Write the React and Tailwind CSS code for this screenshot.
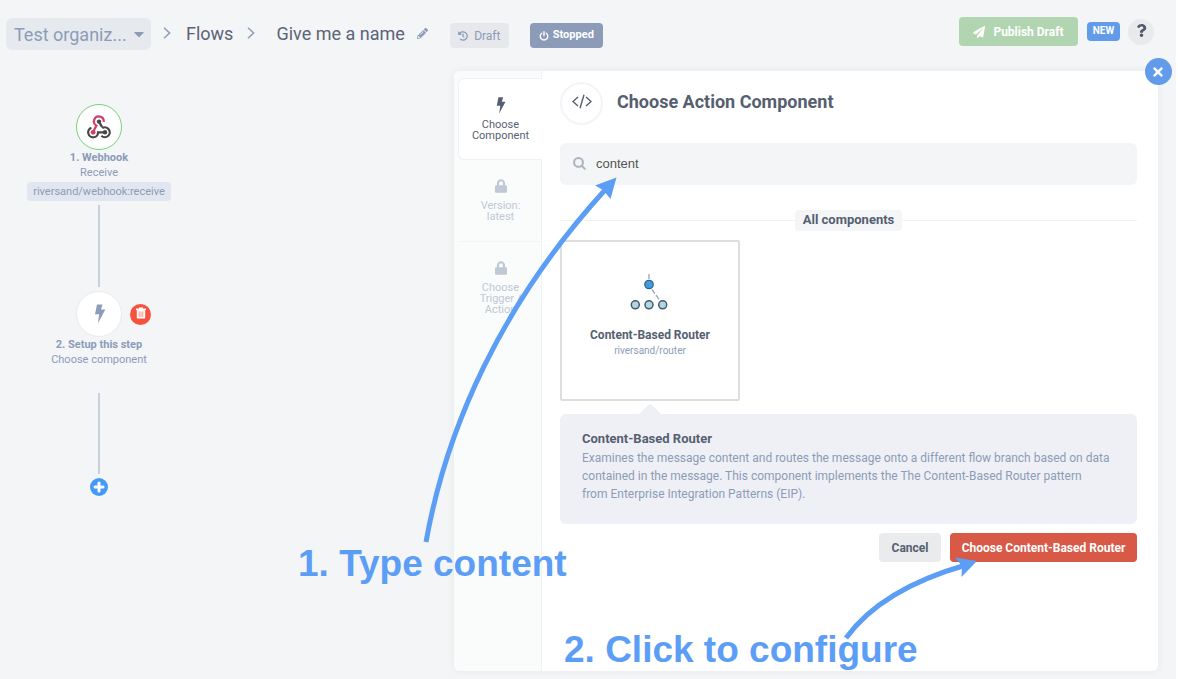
import React, { useState } from "react";
import {
  FaCaretDown,
  FaHistory,
  FaLock,
  FaPaperPlane,
  FaPencilAlt,
  FaQuestion,
  FaTimes,
} from "react-icons/fa";

function Chevron() {
  return (
    <svg className="h-3 w-2 shrink-0 text-[#8c9cb8]" viewBox="0 0 8 12" fill="none" stroke="currentColor" strokeWidth="1.5" aria-hidden="true">
      <path d="M1 0.8 6.6 6 1 11.2" />
    </svg>
  );
}

function Bolt({ className }) {
  return (
    <svg className={className} viewBox="0 0 12 20" fill="currentColor" aria-hidden="true">
      <path d="M3 0.4H8.6L6.9 5.6H11.3L3.9 19.4L5.2 10.3H1Z" />
    </svg>
  );
}

function PlusIcon() {
  return (
    <svg className="h-3 w-3" viewBox="0 0 12 12" fill="none" stroke="currentColor" strokeWidth="3" strokeLinecap="round" aria-hidden="true">
      <path d="M6 2V10M2 6H10" />
    </svg>
  );
}

function PowerIcon() {
  return (
    <svg className="h-2.5 w-2.5" viewBox="0 0 10 10" fill="none" stroke="currentColor" strokeWidth="1.4" strokeLinecap="round" aria-hidden="true">
      <path d="M5 0.8V4.6M2.7 2.2A3.8 3.8 0 1 0 7.3 2.2" />
    </svg>
  );
}

function SearchIcon() {
  return (
    <svg className="mb-0.5 h-[13px] w-[13px] text-[#a9b3c0]" viewBox="0 0 13 13" fill="none" stroke="currentColor" strokeWidth="2" strokeLinecap="round" aria-hidden="true">
      <circle cx="5.5" cy="5.4" r="4.4" />
      <path d="M9 9 11.8 11.9" />
    </svg>
  );
}

function WebhookLogo() {
  return (
    <svg className="h-6 w-6" viewBox="0 0 24 24" fill="none" strokeWidth="2.2" aria-hidden="true">
      <path d="M16.7 6.9A4.9 4.9 0 1 0 9.4 10.6L6.1 17" stroke="#d23d6c" />
      <path d="M12 6.6 15.1 12.1" stroke="#474747" />
      <path d="M15.3 13.1A4.9 4.9 0 1 1 14.4 20.8" stroke="#474747" />
      <path d="M4.4 12.8A4.9 4.9 0 1 0 11 17.4H18" stroke="#474747" />
      <circle cx="12" cy="6.6" r="2.2" fill="#474747" />
      <circle cx="6.1" cy="17.3" r="2.4" fill="#d23d6c" />
      <circle cx="18" cy="17.3" r="2.2" fill="#474747" />
    </svg>
  );
}

function TrashIcon() {
  return (
    <svg className="h-3 w-3" viewBox="0 0 12 12" aria-hidden="true">
      <path d="M4 1.6V0.6H8V1.6H11V3H1V1.6Z" fill="#fff" />
      <path d="M1.8 3H10.2V10.4Q10.2 11.6 9 11.6H3Q1.8 11.6 1.8 10.4Z" fill="#fff" />
      <path d="M4.2 4.4V10M6 4.4V10M7.8 4.4V10" stroke="#f7513f" strokeWidth="0.6" />
    </svg>
  );
}

function RouterLogo() {
  return (
    <svg className="mr-0.5 h-9 w-10" viewBox="0 0 40 36" fill="none" aria-hidden="true">
      <path d="M20 0V6M23 15.5 30.5 26" stroke="#9aa3b3" strokeWidth="1.3" strokeDasharray="5 2" />
      <circle cx="20" cy="10.5" r="4.2" fill="#4499e0" stroke="#28688f" strokeWidth="1.3" />
      <g fill="#b0d5e8" stroke="#4b5866" strokeWidth="1.5">
        <circle cx="6.3" cy="30.8" r="4" />
        <circle cx="20" cy="30.8" r="4" />
        <circle cx="33.7" cy="30.8" r="4" />
      </g>
    </svg>
  );
}

function Header() {
  return (
    <header className="flex h-[71px] items-start justify-between pr-[22px] pl-1.5">
      <div className="flex h-[71px] items-start">
        <button className="mt-[18px] flex h-8 w-[145px] shrink-0 items-center justify-between rounded-md bg-[#e6e9ee] pr-1.5 pl-2 text-[18px] text-[#8c9cb8]">
          Test organiz...
          <FaCaretDown className="h-4 w-3" />
        </button>
        <nav aria-label="Breadcrumb" className="mt-[17px] ml-3 flex h-8 items-center text-[18px] whitespace-nowrap text-[#5b6476]">
          <Chevron />
          <a href="#flows" className="ml-[15px]">Flows</a>
          <span className="ml-3.5"><Chevron /></span>
          <span className="ml-[21px]">Give me a name</span>
        </nav>
        <button aria-label="Rename flow" className="mt-7 ml-3 text-[#8c9cb8]">
          <FaPencilAlt className="h-[11px] w-[11px]" />
        </button>
        <button className="mt-[23px] ml-[22px] flex h-[25px] w-[59px] items-center justify-center gap-1.5 rounded bg-[#e6e8eb] text-[12px] text-[#8c9cb8]">
          <FaHistory className="h-2.5 w-2.5" />
          Draft
        </button>
        <button className="mt-[23px] ml-[21px] flex h-[25px] w-[73px] items-center justify-center gap-1 rounded bg-[#8c9cb8] text-[11px] font-bold text-white">
          <PowerIcon />
          Stopped
        </button>
      </div>
      <div className="flex items-center pt-[17px]">
        <button className="flex h-[29px] w-[119px] items-center justify-center gap-2 rounded bg-[#b1d5b0] text-[12px] font-bold text-white">
          <FaPaperPlane className="h-3 w-3" />
          Publish Draft
        </button>
        <a href="#new" className="ml-[9px] flex h-[19px] w-[33px] items-center justify-center rounded bg-[#619bea] pb-0.5 text-[10px] font-bold text-white">
          NEW
        </a>
        <button aria-label="Help" className="ml-2 flex h-[26px] w-[26px] items-center justify-center rounded-full bg-[#e8eaed] pb-0.5 text-[#4f5868]">
          <FaQuestion className="h-[13px] w-[13px]" />
        </button>
      </div>
    </header>
  );
}

function FlowCanvas() {
  return (
    <section aria-label="Flow" className="w-[454px] shrink-0">
      <div className="flex w-[198px] flex-col items-center pt-[33px] text-[11px] leading-[15px] text-[#8c9cb8]">
        <button aria-label="Webhook step" className="flex h-[46px] w-[46px] items-center justify-center rounded-full border border-[#74cf78] bg-white">
          <WebhookLogo />
        </button>
        <strong className="font-bold">1. Webhook</strong>
        <span>Receive</span>
        <span className="mt-0.5 flex h-[19px] items-center rounded bg-[#e2e6ee] px-1.5">riversand/webhook:receive</span>
        <div className="mt-1 h-[82px] w-0.5 bg-[#c8d0e0]" />
        <div className="mt-1 flex w-full items-center">
          <button aria-label="Set up this step" className="ml-[76px] flex h-[46px] w-[46px] items-center justify-center rounded-full border border-[#e9ebee] bg-white pl-0.5">
            <Bolt className="h-5 w-3" />
          </button>
          <button aria-label="Delete step" className="ml-2 flex h-[21px] w-[21px] items-center justify-center rounded-full bg-[#f7513f] pb-0.5">
            <TrashIcon />
          </button>
        </div>
        <strong className="font-bold">2. Setup this step</strong>
        <span>Choose component</span>
        <div className="mt-[26px] h-[81px] w-0.5 bg-[#c8d0e0]" />
        <button aria-label="Add step" className="mt-1 flex h-[18px] w-[18px] items-center justify-center rounded-full bg-[#4599f7] text-white">
          <PlusIcon />
        </button>
      </div>
    </section>
  );
}

function Steps() {
  return (
    <ol className="w-[88px] shrink-0 rounded-l-md border-r border-[#eff1f2] bg-[#fafcfb] pt-[7px] pl-1 text-center text-[11px] leading-[11px] text-[#c0c8d5]">
      <li className="-mr-px flex h-[82px] flex-col items-center rounded-l-md border border-r-0 border-[#eff1f2] bg-white pt-[18px] text-[#565f70]">
        <Bolt className="mb-[5px] h-[17px] w-3" />
        <p>Choose<br />Component</p>
      </li>
      <li className="flex h-[82px] flex-col items-center border-b border-[#f2f4f5] pt-[19px] pl-0.5">
        <FaLock className="mb-[7px] h-[14px] w-3" />
        <p>Version:<br />latest</p>
      </li>
      <li className="flex flex-col items-center pt-[19px] pl-0.5">
        <FaLock className="mb-[7px] h-[14px] w-3" />
        <p>Choose<br />Trigger /<br />Action</p>
      </li>
    </ol>
  );
}

function ComponentPicker() {
  const [query, setQuery] = useState("content");
  return (
    <div className="min-w-0 flex-1 pt-[11px] pr-[21px] pl-[18px]">
      <div className="flex items-start">
        <span className="flex h-[43px] w-[43px] shrink-0 items-center justify-center rounded-full border-2 border-[#f3f4f5] pb-1 text-[#565f70]">
          <svg className="h-4 w-5" viewBox="0 0 20 16" fill="none" stroke="currentColor" strokeWidth="1.4" aria-hidden="true">
            <path d="M6 3 1 7.5 6 12M14 3 19 7.5 14 12M12 0.7 8 14.3" />
          </svg>
        </span>
        <h1 className="ml-3.5 text-[18px] leading-10 font-bold text-[#565f70]">Choose Action Component</h1>
      </div>
      <label className="mt-[18px] flex h-[42px] items-center rounded-md bg-[#f3f5f7] pl-[13px]">
        <SearchIcon />
        <input
          aria-label="Search components"
          value={query}
          onChange={(event) => setQuery(event.target.value)}
          className="ml-2.5 min-w-0 flex-1 bg-transparent font-['Liberation_Sans',Arial,sans-serif] text-[13px] text-[#555] outline-none"
        />
      </label>
      <div className="mt-[25px] flex h-[21px] items-center">
        <span className="h-px flex-1 bg-[#f2f3f4]" />
        <h2 className="flex h-[21px] items-center rounded bg-[#f3f5f7] px-2 pb-0.5 text-[13px] font-bold text-[#565f70]">All components</h2>
        <span className="h-px flex-1 bg-[#f2f3f4]" />
      </div>
      <button className="mt-[9px] flex h-[161px] w-[180px] flex-col items-center rounded-xs border-2 border-[#dddfdf] pt-8">
        <RouterLogo />
        <span className="mt-[17px] text-[12px] leading-4 font-bold text-[#565f70]">Content-Based Router</span>
        <span className="text-[10px] leading-4 text-[#8c9cb8]">riversand/router</span>
      </button>
      <svg className="mt-[3px] ml-[79px] h-2.5 w-[22px]" viewBox="0 0 22 10" fill="#eff0f5" aria-hidden="true">
        <path d="M0 10 9 1.2Q11 -0.8 13 1.2L22 10Z" />
      </svg>
      <article className="min-h-[110px] rounded-md bg-[#eff0f5] px-[22px] pt-4 text-[12px] leading-[18px]">
        <h3 className="mb-px text-[13px] font-bold text-[#565f70]">Content-Based Router</h3>
        <p className="text-[#8c9cb8]">
          Examines the message content and routes the message onto a different flow branch based on data contained in the message. This component implements the The Content-Based Router pattern
          <br />
          from Enterprise Integration Patterns (EIP).
        </p>
      </article>
      <div className="mt-[9px] flex justify-end gap-[9px] text-[12px] font-bold">
        <button className="h-[29px] w-[62px] rounded bg-[#e9ebec] text-[#565f70]">Cancel</button>
        <button className="h-[29px] w-[187px] rounded bg-[#d75946] whitespace-nowrap text-white">Choose Content-Based Router</button>
      </div>
    </div>
  );
}

function Annotations() {
  return (
    <div className="pointer-events-none absolute inset-0 overflow-hidden font-['Liberation_Sans',Arial,sans-serif] text-[37px] leading-[42px] font-bold whitespace-nowrap text-[#5c9df5]">
      <svg className="absolute top-0 left-0 h-[679px] w-[1178px]" viewBox="0 0 1178 679" aria-hidden="true">
        <g fill="none" stroke="currentColor" strokeWidth="5">
          <path d="M426 542C446 430 500 305 605 190" />
          <path d="M846 638C870 605 910 581 966 565" />
        </g>
        <path d="M616.5 177.5 595 185.5 603 190 610.5 199Z" fill="currentColor" />
        <path d="M977 561 955 557.5 962 566 961.5 577Z" fill="currentColor" />
      </svg>
      <p className="absolute top-[543px] left-[298px]">1. Type content</p>
      <p className="absolute top-[629px] left-[564px]">2. Click to configure</p>
    </div>
  );
}

export default function App() {
  return (
    <div className="relative min-h-screen border-r-2 border-white bg-[#f3f5f7] font-['Roboto','Noto_Sans',sans-serif]">
      <Header />
      <main className="flex pr-[18px] pb-2">
        <FlowCanvas />
        <section aria-label="Choose action component" className="relative flex min-h-[600px] min-w-0 flex-1 rounded-md bg-white shadow-[0_0_8px_rgba(0,0,0,0.06)]">
          <Steps />
          <ComponentPicker />
          <button aria-label="Close" className="absolute -top-[13px] -right-[14px] flex h-[27px] w-[27px] items-center justify-center rounded-full bg-[#619bea] pr-0.5 text-white">
            <FaTimes className="h-[14px] w-[14px]" />
          </button>
        </section>
      </main>
      <Annotations />
    </div>
  );
}
